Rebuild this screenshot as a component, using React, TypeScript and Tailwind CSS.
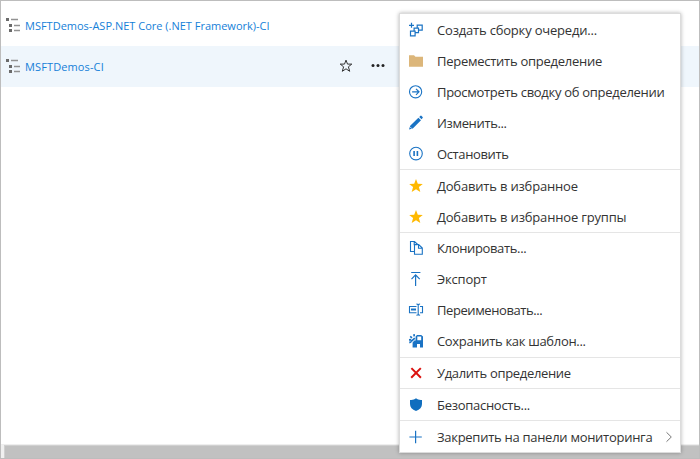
import React from 'react';

const blue = '#1a73c4';

function Icon({ children }: { children: React.ReactNode }) {
  return (
    <svg width="16" height="16" viewBox="0 0 16 16" fill="none" stroke={blue} strokeWidth="1.1" className="shrink-0">
      {children}
    </svg>
  );
}

const icons = {
  queue: (
    <Icon>
      <path d="M3.5 .8v5M1 3.3h5M2.5 9.2h4.6v4.6H2.5zM6.1 9V6.2h4.4v4.4H7.3M9.2 6V3.2h5v4.9h-3.5" strokeWidth="1.2" />
    </Icon>
  ),
  folder: (
    <Icon>
      <path d="M1 2.3h5l1.5 1.5H15v10H1z" fill="#dcb67a" stroke="none" />
    </Icon>
  ),
  arrow: (
    <Icon>
      <circle cx="7.6" cy="7.8" r="6.1" />
      <path d="M4.1 7.8h6.7M8 4.8l3 3-3 3" strokeWidth="1.2" />
    </Icon>
  ),
  pencil: (
    <Icon>
      <path d="M1 14.6l1.2-3.8 8.2-8.1 2.6 2.6-8.2 8.1zM11.2 2l1.3-1.2q.6-.4 1.1.1l1 1q.5.6 0 1.1l-1.1 1.3z" fill={blue} stroke="none" />
      <path d="M1.9 11.7l2 2" stroke="#fff" strokeWidth=".7" />
    </Icon>
  ),
  pause: (
    <Icon>
      <circle cx="8" cy="7.6" r="6.3" />
      <path d="M6.1 5v5M9.4 5v5" strokeWidth="1.6" />
    </Icon>
  ),
  star: (
    <Icon>
      <path d="M8 .9l1.8 4.8 5 .2-3.9 3.2 1.4 5L8 11.2l-4.3 2.9 1.4-5L1.2 5.9l5-.2z" fill="#ffb900" stroke="none" />
    </Icon>
  ),
  clone: (
    <Icon>
      <path d="M6 11.5H2.5v-10h4l3.2 3M6.2 1.6v3.2h3.3M6.5 4.5h4.2L14.3 8v6.2H6.5zM10.5 4.6v3.6h3.7" />
    </Icon>
  ),
  export: (
    <Icon>
      <path d="M3.2 1.5h9.2M7.6 15V4M3.5 8.1l4.1-4.2 4.1 4.2" strokeWidth="1.2" />
    </Icon>
  ),
  rename: (
    <Icon>
      <path d="M8.5 4.5h-7v6.2h7M12 4.5h2.5v6.2H12M8.4 2q1.4 0 1.8.8.5-.8 1.9-.8M10.2 2.6v10M8.4 13.2q1.4 0 1.8-.8.5.8 1.9.8" />
      <path d="M3 7.5h5" strokeWidth="2" />
    </Icon>
  ),
  template: (
    <Icon>
      <path d="M7.6 3.4L9 2h4.2L15 3.5v11h-3v-3.6H9v3.6H4.6V9.4L6.4 7.6h1.2zM9.3 3.6v3.6h3.9V3.6z" fill={blue} fillRule="evenodd" stroke="none" />
      <path d="M1 6.8l2.2-.1M2.2 3.4l1.8 1.4M6 1.2l.2 2.2M3.2 8.4l3.6-3.2M1.3 9.6l2-.8" strokeWidth="1.7" />
    </Icon>
  ),
  remove: (
    <Icon>
      <path d="M3.4 3.1l9.5 9.6M12.8 3.1l-9.6 9.6" stroke="#db120f" strokeWidth="2" />
    </Icon>
  ),
  shield: (
    <Icon>
      <path d="M8 1.3c1.8 1.5 3.5 1.8 6 1.6v4.2c0 3.3-2.1 5.4-6 7-3.9-1.6-6-3.7-6-7V2.9c2.5.2 4.2-.1 6-1.6z" fill="#106ebe" stroke="none" />
    </Icon>
  ),
  plus: (
    <Icon>
      <path d="M7.6 1.8v12.4M1.4 8h12.4" strokeWidth="1.2" />
    </Icon>
  ),
};

type Item = { icon: keyof typeof icons; label: string; track: string; sub?: boolean };

const groups: { row: string; items: Item[] }[] = [
  {
    row: 'h-[31px]',
    items: [
      { icon: 'queue', label: 'Создать сборку очереди...', track: 'tracking-[-0.19px]' },
      { icon: 'folder', label: 'Переместить определение', track: 'tracking-[-0.26px]' },
      { icon: 'arrow', label: 'Просмотреть сводку об определении', track: 'tracking-[-0.3px]' },
      { icon: 'pencil', label: 'Изменить...', track: 'tracking-[-0.35px]' },
      { icon: 'pause', label: 'Остановить', track: 'tracking-[-0.37px]' },
    ],
  },
  {
    row: 'h-[31px]',
    items: [
      { icon: 'star', label: 'Добавить в избранное', track: 'tracking-[-0.18px]' },
      { icon: 'star', label: 'Добавить в избранное группы', track: 'tracking-[-0.17px]' },
    ],
  },
  {
    row: 'h-[31px] pb-0.5',
    items: [
      { icon: 'clone', label: 'Клонировать...', track: 'tracking-[-0.35px]' },
      { icon: 'export', label: 'Экспорт', track: 'tracking-[-0.2px]' },
      { icon: 'rename', label: 'Переименовать...', track: 'tracking-[-0.42px]' },
      { icon: 'template', label: 'Сохранить как шаблон...', track: 'tracking-[-0.32px]' },
    ],
  },
  { row: 'h-[30px]', items: [{ icon: 'remove', label: 'Удалить определение', track: 'tracking-[-0.33px]' }] },
  { row: 'h-[31px]', items: [{ icon: 'shield', label: 'Безопасность...', track: 'tracking-[-0.28px]' }] },
  { row: 'h-[31px]', items: [{ icon: 'plus', label: 'Закрепить на панели мониторинга', track: 'tracking-[-0.28px]', sub: true }] },
];

function DefinitionIcon() {
  return (
    <svg width="14" height="15" viewBox="0 0 14 15" className="shrink-0">
      <path d="M0 0h3v3H0zM3 6h3v3H3zM3 11h3v3H3z" fill="#6b6b6b" />
      <path d="M5 1.5h7M8 7.5h6M8 12.5h6" stroke="#929292" strokeWidth="1.5" />
    </svg>
  );
}

function Menu() {
  return (
    <div className="absolute left-[398px] top-[12px] w-[282px] h-[440px] bg-white border border-[#dcdcdc] shadow-[0_0_4px_rgba(0,0,0,0.3)]">
      {groups.map((group, i) => (
        <div key={i} className={i ? 'border-t border-[#e5e5e5]' : ''}>
          {group.items.map((item) => (
            <div key={item.label} className={`flex items-center pl-2 pr-[7px] ${group.row}`}>
              {icons[item.icon]}
              <span className={`ml-[13px] whitespace-nowrap text-[13px] leading-5 text-[#333] ${item.track}`}>{item.label}</span>
              {item.sub && (
                <svg width="8" height="12" viewBox="0 0 8 12" fill="none" stroke="#666" strokeWidth=".9" className="ml-auto">
                  <path d="M1.5 1.3L6.3 6l-4.8 4.7" />
                </svg>
              )}
            </div>
          ))}
        </div>
      ))}
    </div>
  );
}

export default function App() {
  return (
    <div className="relative flex h-[459px] w-[700px] flex-col overflow-hidden border border-[#bdbdbd] bg-white font-['Open_Sans','Noto_Sans',sans-serif]">
      <div className="flex h-[45px] items-center pl-[5px] pt-1">
        <DefinitionIcon />
        <span className="ml-[5px] whitespace-nowrap text-[11px] leading-4 text-[#1580d8]">MSFTDemos-ASP.NET Core (.NET Framework)-CI</span>
      </div>
      <div className="flex h-[41px] items-center bg-[#eff6fc] pl-[5px]">
        <DefinitionIcon />
        <span className="ml-[5px] w-[313px] whitespace-nowrap text-[11px] leading-4 tracking-[0.12px] text-[#1580d8]">MSFTDemos-CI</span>
        <svg width="16" height="16" viewBox="0 0 16 16" fill="none" stroke="#333" className="shrink-0">
          <path d="M8 1.1l1.5 4h4.3l-3.4 2.7 1.3 4.5L8 9.8l-3.7 2.5 1.3-4.5L2.2 5.1h4.3z" />
        </svg>
        <svg width="14" height="8" viewBox="0 0 14 8" fill="#222" className="ml-[17px] shrink-0">
          <circle cx="2" cy="2.5" r="1.5" />
          <circle cx="7" cy="2.5" r="1.5" />
          <circle cx="12" cy="2.5" r="1.5" />
        </svg>
      </div>
      <div className="mt-auto flex h-[14px] border-t border-[#eee] bg-[#f0f0f0] pl-[3px]">
        <div className="flex-1 border-l border-t border-[#d0d0d0] bg-[#c1c1c1]" />
      </div>
      <Menu />
    </div>
  );
}
